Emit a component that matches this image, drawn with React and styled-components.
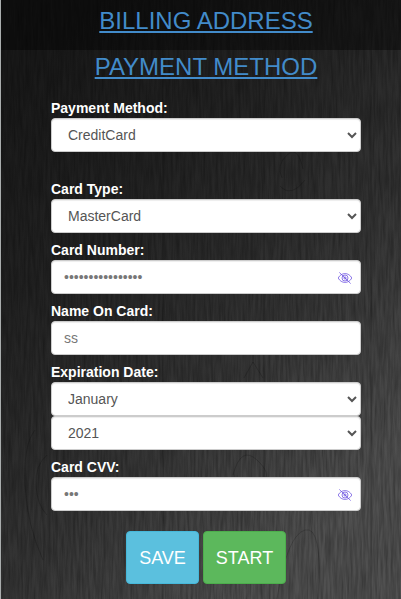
import React from 'react';
import styled, { createGlobalStyle } from 'styled-components';

const EyeIcon = () => (
  <S_eye viewBox='0 0 16 16'>
    <path d='M1.2 8C2.8 5 5.2 3.6 8 3.6S13.2 5 14.8 8C13.2 11 10.8 12.4 8 12.4S2.8 11 1.2 8Z' />
    <circle cx='8' cy='8' r='3' />
    <circle cx='8' cy='8' r='1.1' />
    <path d='M2.3 2.4L13.7 13.6' />
  </S_eye>
);

const WoodGrain = () => (
  <S_wood width='400' height='599' viewBox='0 0 400 599'>
    <defs>
      <linearGradient id='tone' gradientUnits='userSpaceOnUse' x1='40' y1='60' x2='410' y2='440'>
        <stop offset='0' stopColor='#191919' />
        <stop offset='0.3' stopColor='#222222' />
        <stop offset='0.65' stopColor='#343434' />
        <stop offset='1' stopColor='#505050' />
      </linearGradient>
      <filter id='grain' x='0' y='0' width='100%' height='100%'>
        <feTurbulence type='fractalNoise' baseFrequency='0.4 0.03' numOctaves='3' seed='7' />
        <feColorMatrix values='0 0 0 0 0  0 0 0 0 0  0 0 0 0 0  0.5 0 0 0 -0.14' />
      </filter>
    </defs>
    <rect width='400' height='599' fill='url(#tone)' />
    <rect width='400' height='599' filter='url(#grain)' />
    <g fill='none' stroke='#000' strokeOpacity='0.18'>
      <path d='M162 50V599M370 50V599M263 90V599' />
      <path d='M34 430Q22 445 24 485T42 560M46 455Q34 465 35 485T46 515' />
      <path d='M243 378L252 362L262 378M281 178Q275 165 286 155T302 169M279 186Q290 198 304 180' />
      <path d='M232 475Q240 445 256 460T261 482M276 599Q286 535 304 530T317 599' />
    </g>
  </S_wood>
);

const SelectField = ({ name, label, value }) => (
  <>
    {label && <S_label htmlFor={name}>{label}</S_label>}
    <S_select id={name} defaultValue={value}>
      <option value={value}>{value}</option>
    </S_select>
  </>
);

const InputField = ({ name, label, value, secret }) => (
  <>
    <S_label htmlFor={name}>{label}</S_label>
    <S_inputBox>
      <S_input id={name} type={secret ? 'password' : 'text'} placeholder={value} />
      {secret && <EyeIcon />}
    </S_inputBox>
  </>
);

const App = () => (
  <S_page>
    <GlobalStyle />
    <WoodGrain />
    <S_content>
      <S_billing>
        <S_title href='#billing'>BILLING ADDRESS</S_title>
      </S_billing>
      <S_payment>
        <S_title href='#payment'>PAYMENT METHOD</S_title>
        <S_form onSubmit={(e) => e.preventDefault()}>
          <S_group $gap='27px'>
            <SelectField name='method' label='Payment Method:' value='CreditCard' />
          </S_group>
          <S_group>
            <SelectField name='type' label='Card Type:' value='MasterCard' />
          </S_group>
          <S_group>
            <InputField name='number' label='Card Number:' value='••••••••••••••••' secret />
          </S_group>
          <S_group>
            <InputField name='owner' label='Name On Card:' value='ss' />
          </S_group>
          <S_group>
            <SelectField name='month' label='Expiration Date:' value='January' />
            <SelectField name='year' value='2021' />
          </S_group>
          <S_group $gap='20px'>
            <InputField name='cvv' label='Card CVV:' value='•••' secret />
          </S_group>
          <S_buttons>
            <S_button $width='73px' $color='#5bc0de' $border='#46b8da'>SAVE</S_button>
            <S_button $width='83px' $color='#5cb85c' $border='#4cae4c'>START</S_button>
          </S_buttons>
        </S_form>
      </S_payment>
    </S_content>
  </S_page>
);

export default App;

const GlobalStyle = createGlobalStyle`
  * {
    box-sizing: border-box;
  }

  body {
    margin: 0;
    overflow: hidden;
    font-family: 'Liberation Sans', Arial, sans-serif;
    font-size: 14px;
    line-height: 20px;
  }
`;

const S_page = styled.div`
  display: grid;
  height: 599px;
  border-left: 1px solid #a9adad;
`;

const S_wood = styled.svg`
  grid-area: 1 / 1;
  display: block;
`;

const S_content = styled.div`
  grid-area: 1 / 1;
  z-index: 1;
`;

const S_billing = styled.div`
  height: 50px;
  padding: 7px 0 0 10px;
  text-align: center;
  background: rgba(0, 0, 0, 0.4);
`;

const S_payment = styled.div`
  padding: 3px 0 0 10px;
  text-align: center;
`;

const S_title = styled.a`
  display: block;
  font-size: 24px;
  line-height: 27px;
  color: #428bca;
  text-decoration: underline;
`;

const S_form = styled.form`
  width: 310px;
  margin: 18px auto 0;
  text-align: left;
`;

const S_group = styled.div`
  display: flex;
  flex-direction: column;
  margin-bottom: ${({ $gap }) => $gap || '7px'};
`;

const S_label = styled.label`
  font-weight: bold;
  color: #fff;
`;

const S_select = styled.select`
  width: 100%;
  height: 34px;
  padding: 6px 12px;
  font: inherit;
  color: #555;
  background: #fff;
  border: 1px solid #ccc;
  border-radius: 4px;
  box-shadow: inset 0 1px 1px rgba(0, 0, 0, 0.075);
`;

const S_inputBox = styled.div`
  display: flex;
  align-items: center;
  height: 34px;
  padding-right: 7px;
  background: #fff;
  border: 1px solid #ccc;
  border-radius: 4px;
  box-shadow: inset 0 1px 1px rgba(0, 0, 0, 0.075);
`;

const S_input = styled.input`
  flex: 1;
  min-width: 0;
  padding: 0 12px;
  font: inherit;
  color: #555;
  background: none;
  border: 0;
  outline: 0;

  &::placeholder {
    color: #777;
  }
`;

const S_eye = styled.svg`
  width: 16px;
  height: 16px;
  margin-top: 2px;
  fill: none;
  stroke: #6a4fe0;
  stroke-width: 0.75;
`;

const S_buttons = styled.div`
  display: flex;
  justify-content: center;
  gap: 4px;
`;

const S_button = styled.button`
  width: ${({ $width }) => $width};
  height: 53px;
  padding: 0;
  font: inherit;
  font-size: 18px;
  color: #fff;
  background: ${({ $color }) => $color};
  border: 1px solid ${({ $border }) => $border};
  border-radius: 4px;
`;
